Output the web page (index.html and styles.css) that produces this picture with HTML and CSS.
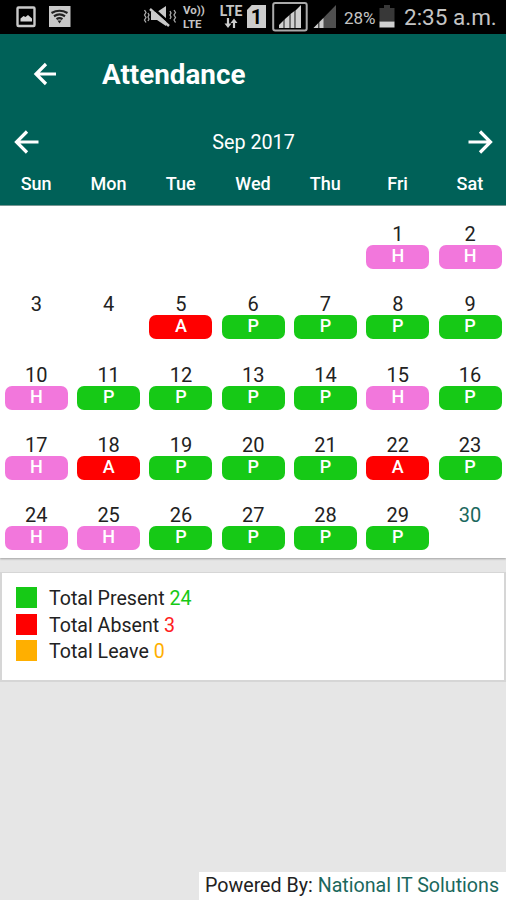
FILE: index.html
```
<!DOCTYPE html>
<html lang="en">
<head>
    <meta charset="UTF-8">
    <meta name="viewport" content="width=device-width, initial-scale=1.0">
    <title>Attendance</title>
    <link rel="stylesheet" href="styles.css">
</head>
<body>
    <div class="status-bar">
        <svg class="icon-image" width="20" height="34" viewBox="0 0 20 34">
            <rect x="1.5" y="7.5" width="17" height="18.5" rx="1" fill="none" stroke="#c9c9c9" stroke-width="2.4"/>
            <path d="M4.500 21.500v-3l3-2.500 2 1 2.500-2 4 3.500v3z" fill="#d5d5d5"/>
        </svg>
        <svg class="icon-wifi" width="24" height="34" viewBox="0 0 24 34">
            <rect x="1" y="6" width="21.5" height="21" fill="#c9c9c9"/>
            <path d="M3.5 13q8-4.500 16 0M6 16.200q5.500-3.500 11 0M8.500 19.200q3-2 6 0" fill="none" stroke="#222" stroke-width="2.200"/>
            <path d="M9.500 20.500h4l-2 3z" fill="#222"/>
        </svg>
        <svg class="icon-mute" width="34" height="34" viewBox="0 0 34 34">
            <path d="M8 12h6l9-6v20l-9-6H8z" fill="#c9c9c9"/>
            <path d="M8 6.500l19 17" stroke="#000" stroke-width="2.500"/>
            <path d="M7 9l19 17" stroke="#c9c9c9" stroke-width="2.400"/>
            <path d="M1.500 10l1.500 2.500-1.500 2.500 1.500 2.500-1.500 2.500 1.500 2.500M5 13l1 2-1 2 1 2-1 2M27 11l1 2-1 2 1 2-1 2M31 10l1.500 2.500-1.500 2.500 1.500 2.500-1.500 2.500 1.500 2.500" fill="none" stroke="#aaa" stroke-width="1.300"/>
        </svg>
        <div class="volte"><span>Vo))</span><span>LTE</span></div>
        <div class="lte">
            <span>LTE</span>
            <svg width="14" height="11" viewBox="0 0 14 11">
                <path d="M4 0v8M10 10V3" stroke="#ccc" stroke-width="2.200"/>
                <path d="M0.500 5.500h7L4 10zM6.500 5h7L10 0.500z" fill="#ccc"/>
            </svg>
        </div>
        <div class="sim">1</div>
        <svg class="icon-signal" width="36" height="34" viewBox="0 0 36 34">
            <rect x="1.200" y="3" width="33.500" height="27.500" rx="2" fill="none" stroke="#aaa" stroke-width="2"/>
            <path d="M7 28v-3l4-4v7zM13 28v-9l4-3.500v12.500zM18.500 28v-14l4-3v17zM24 28v-18l5-5v23z" fill="#d0d0d0"/>
            <path d="M11 28v-7l2-2v9zM17 28v-12.500l1.500-1.500v14zM22.500 28v-17l1.500-1v18z" fill="#777"/>
        </svg>
        <svg class="icon-signal-two" width="24" height="34" viewBox="0 0 24 34">
            <path d="M0.500 28L23 5v23z" fill="#505050"/>
            <path d="M0.500 28l4.500-4.500v4.500zM6.500 28v-6l4-4v10z" fill="#ccc"/>
        </svg>
        <span class="battery-text">28%</span>
        <svg class="icon-battery" width="16" height="34" viewBox="0 0 16 34">
            <path d="M0.500 8H5V5h6v3h4.500v13.500H0.500z" fill="#383838"/>
            <rect x="0.500" y="21.500" width="15" height="6" fill="#d0d0d0"/>
        </svg>
        <span class="clock">2:35 a.m.</span>
    </div>

    <div class="header">
        <div class="title-bar">
            <svg class="back" width="24" height="24" viewBox="0 0 24 24">
                <path d="M23 12H3M13 2L3 12l10 10"/>
            </svg>
            <h1>Attendance</h1>
        </div>
        <div class="month-bar">
            <svg width="26" height="26" viewBox="0 0 26 26">
                <path d="M25.500 13H3.500M14 2.500L3.500 13 14 23.500"/>
            </svg>
            <span>Sep 2017</span>
            <svg width="26" height="26" viewBox="0 0 26 26">
                <path d="M0.500 13h22M12 2.500L22.500 13 12 23.500"/>
            </svg>
        </div>
        <div class="weekdays">
            <span>Sun</span>
            <span>Mon</span>
            <span>Tue</span>
            <span>Wed</span>
            <span>Thu</span>
            <span>Fri</span>
            <span>Sat</span>
        </div>
    </div>

    <div class="calendar">
        <div class="day first">1<span class="mark holiday">H</span></div>
        <div class="day">2<span class="mark holiday">H</span></div>

        <div class="day">3</div>
        <div class="day">4</div>
        <div class="day">5<span class="mark absent">A</span></div>
        <div class="day">6<span class="mark present">P</span></div>
        <div class="day">7<span class="mark present">P</span></div>
        <div class="day">8<span class="mark present">P</span></div>
        <div class="day">9<span class="mark present">P</span></div>

        <div class="day">10<span class="mark holiday">H</span></div>
        <div class="day">11<span class="mark present">P</span></div>
        <div class="day">12<span class="mark present">P</span></div>
        <div class="day">13<span class="mark present">P</span></div>
        <div class="day">14<span class="mark present">P</span></div>
        <div class="day">15<span class="mark holiday">H</span></div>
        <div class="day">16<span class="mark present">P</span></div>

        <div class="day">17<span class="mark holiday">H</span></div>
        <div class="day">18<span class="mark absent">A</span></div>
        <div class="day">19<span class="mark present">P</span></div>
        <div class="day">20<span class="mark present">P</span></div>
        <div class="day">21<span class="mark present">P</span></div>
        <div class="day">22<span class="mark absent">A</span></div>
        <div class="day">23<span class="mark present">P</span></div>

        <div class="day">24<span class="mark holiday">H</span></div>
        <div class="day">25<span class="mark holiday">H</span></div>
        <div class="day">26<span class="mark present">P</span></div>
        <div class="day">27<span class="mark present">P</span></div>
        <div class="day">28<span class="mark present">P</span></div>
        <div class="day">29<span class="mark present">P</span></div>
        <div class="day today">30</div>
    </div>

    <div class="totals">
        <div class="total"><i class="present"></i>Total Present <b class="present-text">24</b></div>
        <div class="total"><i class="absent"></i>Total Absent <b class="absent-text">3</b></div>
        <div class="total"><i class="leave"></i>Total Leave <b class="leave-text">0</b></div>
    </div>

    <div class="footer">Powered By: <span>National IT Solutions</span></div>
</body>
</html>
```
FILE: styles.css
```
* {
    box-sizing: border-box;
}
body {
    margin: 0;
    height: 900px;
    display: flex;
    flex-direction: column;
    overflow: hidden;
    background-color: #e6e6e6;
    font-family: Roboto, sans-serif;
    color: #222;
}

/* status bar */
.status-bar {
    display: flex;
    height: 34px;
    flex-shrink: 0;
    background-color: #000;
    color: #c4c4c4;
    white-space: nowrap;
}
.status-bar svg {
    flex-shrink: 0;
}
.icon-image {
    margin-left: 16px;
}
.icon-wifi {
    margin-left: 12px;
}
.icon-mute {
    margin-left: 71px;
}
.volte {
    display: flex;
    flex-direction: column;
    width: 24px;
    margin-left: 6px;
    padding-top: 3px;
    font-size: 11.5px;
    font-weight: 700;
    line-height: 14px;
}
.lte {
    display: flex;
    flex-direction: column;
    align-items: center;
    width: 26px;
    margin-left: 11px;
    padding-top: 4px;
    font-size: 14px;
    font-weight: 700;
    line-height: 14px;
}
.sim {
    width: 19px;
    height: 23px;
    margin: 5px 0 0 3px;
    background-color: #ccc;
    clip-path: polygon(25% 0, 100% 0, 100% 100%, 0 100%, 0 22%);
    color: #000;
    font-size: 20px;
    font-weight: 700;
    line-height: 24px;
    text-align: center;
}
.icon-signal {
    margin-left: 6px;
}
.icon-signal-two {
    margin-left: 5px;
}
.battery-text {
    width: 35px;
    margin-left: 7px;
    font-size: 17px;
    line-height: 36px;
}
.icon-battery {
    margin-left: 0;
}
.clock {
    margin-left: 9px;
    font-size: 22.5px;
    line-height: 35px;
}

/* green header */
.header {
    height: 172px;
    flex-shrink: 0;
    background-color: #006158;
    border-bottom: 1px solid #7a9a96;
    color: #fff;
}
.header svg {
    fill: none;
    stroke: #fff;
    stroke-width: 3.2;
}
.title-bar {
    display: flex;
    align-items: center;
    height: 80px;
    padding-left: 33px;
}
.title-bar h1 {
    margin: 0 0 0 45px;
    font-size: 27.8px;
    font-weight: 700;
}
.month-bar {
    display: flex;
    align-items: center;
    justify-content: space-between;
    height: 56px;
    padding: 0 12px 0 13px;
    font-size: 19.8px;
}
.weekdays {
    display: grid;
    grid-template-columns: repeat(7, 1fr);
    line-height: 28px;
    font-size: 18px;
    font-weight: 500;
    text-align: center;
}

/* calendar */
.calendar {
    display: grid;
    grid-template-columns: repeat(7, 1fr);
    grid-auto-rows: 70.3px;
    height: 352px;
    flex-shrink: 0;
    background-color: #fff;
    box-shadow: 0 1px 2px rgba(0, 0, 0, 0.3);
}
.day {
    padding: 17px 4.4px 0 4.8px;
    font-size: 20px;
    line-height: 22px;
    text-align: center;
}
.first {
    grid-column-start: 6;
}
.today {
    color: #1b685d;
}
.mark {
    display: block;
    height: 24px;
    border-radius: 7px;
    color: #fff;
    font-size: 18px;
    font-weight: 500;
    line-height: 22px;
}
.present {
    background-color: #16c916;
}
.absent {
    background-color: #ff0000;
}
.holiday {
    background-color: #f277dc;
}
.leave {
    background-color: #ffaf00;
}

/* totals */
.totals {
    height: 110px;
    flex-shrink: 0;
    margin-top: 14px;
    padding: 12px 14px;
    background-color: #fff;
    border: 2px solid #d6d6d6;
    border-top-width: 1px;
}
.total {
    display: flex;
    align-items: center;
    height: 26.7px;
    font-size: 19.6px;
    white-space: pre;
}
.total i {
    width: 21px;
    height: 21px;
    margin: 0 12px 2px 0;
}
.total b {
    font-weight: 400;
}
.present-text {
    color: #16c916;
}
.absent-text {
    color: #ff2020;
}
.leave-text {
    color: #ffaf00;
}

/* footer */
.footer {
    align-self: flex-end;
    width: 307px;
    height: 28px;
    margin-top: auto;
    padding-left: 6px;
    background-color: #fff;
    font-size: 19.65px;
    line-height: 27px;
    white-space: nowrap;
}
.footer span {
    color: #1b685d;
}
```
